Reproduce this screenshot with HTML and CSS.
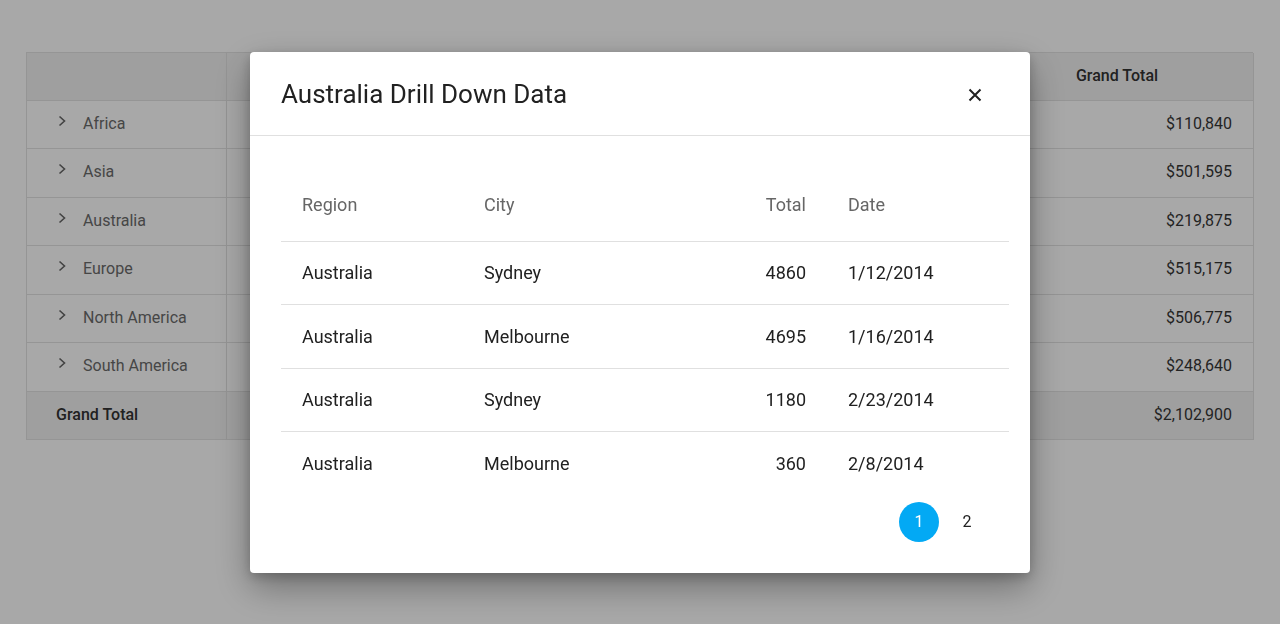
FILE: index.html
```html
<!DOCTYPE html>
<html lang="en">
<head>
<meta charset="utf-8">
<title>Australia Drill Down Data</title>
<link rel="stylesheet" href="styles.css">
</head>
<body>
<div class="page">
  <div class="pivot">
    <div class="cell head first"></div>
    <div class="cell head mid"></div>
    <div class="cell head total-head">Grand Total</div>

    <div class="cell first"><svg class="chev" viewBox="0 0 12 12"><polyline points="3.5,1.5 8.5,6 3.5,10.5"/></svg>Africa</div>
    <div class="cell mid"></div>
    <div class="cell num">$110,840</div>

    <div class="cell first"><svg class="chev" viewBox="0 0 12 12"><polyline points="3.5,1.5 8.5,6 3.5,10.5"/></svg>Asia</div>
    <div class="cell mid"></div>
    <div class="cell num">$501,595</div>

    <div class="cell first"><svg class="chev" viewBox="0 0 12 12"><polyline points="3.5,1.5 8.5,6 3.5,10.5"/></svg>Australia</div>
    <div class="cell mid"></div>
    <div class="cell num">$219,875</div>

    <div class="cell first"><svg class="chev" viewBox="0 0 12 12"><polyline points="3.5,1.5 8.5,6 3.5,10.5"/></svg>Europe</div>
    <div class="cell mid"></div>
    <div class="cell num">$515,175</div>

    <div class="cell first"><svg class="chev" viewBox="0 0 12 12"><polyline points="3.5,1.5 8.5,6 3.5,10.5"/></svg>North America</div>
    <div class="cell mid"></div>
    <div class="cell num">$506,775</div>

    <div class="cell first"><svg class="chev" viewBox="0 0 12 12"><polyline points="3.5,1.5 8.5,6 3.5,10.5"/></svg>South America</div>
    <div class="cell mid"></div>
    <div class="cell num">$248,640</div>

    <div class="cell foot first gt-label">Grand Total</div>
    <div class="cell foot mid"></div>
    <div class="cell foot num">$2,102,900</div>
  </div>
</div>

<div class="overlay"></div>

<div class="dialog" role="dialog" aria-label="Australia Drill Down Data">
  <div class="dialog-header">
    <h1 class="dialog-title">Australia Drill Down Data</h1>
    <button class="close-btn" aria-label="Close">
      <svg viewBox="0 0 14 14"><path d="M1.5 1.5 L12.5 12.5 M12.5 1.5 L1.5 12.5"/></svg>
    </button>
  </div>
  <div class="dialog-body">
    <table class="grid">
      <thead>
        <tr>
          <th class="c-region">Region</th>
          <th class="c-city">City</th>
          <th class="c-total">Total</th>
          <th class="c-date">Date</th>
        </tr>
      </thead>
      <tbody>
        <tr><td>Australia</td><td>Sydney</td><td class="c-total">4860</td><td>1/12/2014</td></tr>
        <tr><td>Australia</td><td>Melbourne</td><td class="c-total">4695</td><td>1/16/2014</td></tr>
        <tr><td>Australia</td><td>Sydney</td><td class="c-total">1180</td><td>2/23/2014</td></tr>
        <tr><td>Australia</td><td>Melbourne</td><td class="c-total">360</td><td>2/8/2014</td></tr>
      </tbody>
    </table>
    <div class="pager">
      <span class="page-num active">1</span>
      <span class="page-num">2</span>
    </div>
  </div>
</div>
</body>
</html>
```

FILE: styles.css
```css
html, body {
  margin: 0;
  padding: 0;
}

body {
  background: #ffffff;
  font-family: Roboto, "Liberation Sans", Arial, sans-serif;
  color: #212121;
  width: 1280px;
  height: 624px;
  overflow: hidden;
}

.page {
  padding: 52px 27px 0 26px;
}

.pivot {
  display: grid;
  grid-template-columns: 200px 754px 273px;
  grid-template-rows: 47.5px repeat(7, 48.5px);
  width: 1227px;
  border-top: 1px solid #e2e2e2;
  border-left: 1px solid #e2e2e2;
  box-sizing: border-box;
}

.cell {
  box-sizing: border-box;
  border-right: 1px solid #e2e2e2;
  border-bottom: 1px solid #e2e2e2;
  display: flex;
  align-items: center;
  padding-bottom: 2px;
  font-size: 16px;
  color: #6b6b6b;
  background: #ffffff;
}

.cell.head,
.cell.foot {
  background: #f2f2f2;
}

.cell.first {
  padding-left: 29px;
}

.chev {
  width: 12px;
  height: 12px;
  margin-right: 15px;
  margin-top: -5px;
  fill: none;
  stroke: #666666;
  stroke-width: 1.6;
}

.cell.gt-label {
  padding-left: 29px;
}

.total-head {
  justify-content: center;
  font-weight: 500;
  color: #333333;
  padding-bottom: 2px;
}

.num {
  justify-content: flex-end;
  padding-right: 21px;
  color: #363636;
}

.gt-label {
  font-weight: 500;
  color: #333333;
}

.overlay {
  position: fixed;
  inset: 0;
  background: rgba(0, 0, 0, 0.34);
}

.dialog {
  position: fixed;
  left: 250px;
  top: 52px;
  width: 780px;
  background: #ffffff;
  border-radius: 4px;
  box-shadow: 0 14px 36px rgba(0, 0, 0, 0.34), 0 4px 12px rgba(0, 0, 0, 0.2);
}

.dialog-header {
  display: flex;
  align-items: center;
  justify-content: space-between;
  height: 83px;
  padding: 0 39px 0 31px;
  border-bottom: 1px solid #e0e0e0;
}

.dialog-title {
  margin: 0;
  font-size: 26px;
  font-weight: 400;
  color: #212121;
  padding-top: 1px;
}

.close-btn {
  width: 32px;
  height: 32px;
  border: none;
  background: transparent;
  padding: 0;
  display: flex;
  align-items: center;
  justify-content: center;
  margin-top: 2px;
}

.close-btn svg {
  width: 14px;
  height: 14px;
  fill: none;
  stroke: #212121;
  stroke-width: 2;
}

.dialog-body {
  padding: 42px 21px 31px 31px;
}

.grid {
  width: 728px;
  border-collapse: collapse;
  table-layout: fixed;
  font-size: 18px;
}

.grid th {
  height: 63px;
  padding: 0 21px 10px 21px;
  text-align: left;
  font-weight: 400;
  color: #666666;
  border-bottom: 1px solid #e0e0e0;
  box-sizing: border-box;
}

.grid .c-region { width: 182px; }
.grid .c-city { width: 264px; }
.grid .c-total { width: 100px; text-align: right; }
.grid .c-date { width: 182px; }

.grid td {
  height: 62.5px;
  padding: 0 21px;
  color: #212121;
  border-bottom: 1px solid #e0e0e0;
}

.grid tbody tr:last-child td {
  border-bottom: none;
}

.pager {
  display: flex;
  justify-content: flex-end;
  gap: 8px;
  padding-right: 22px;
  margin-top: 7px;
}

.page-num {
  width: 40px;
  height: 40px;
  border-radius: 50%;
  display: flex;
  align-items: center;
  justify-content: center;
  font-size: 16px;
  color: #212121;
}

.page-num.active {
  background: #03a9f4;
  color: #ffffff;
}
```
